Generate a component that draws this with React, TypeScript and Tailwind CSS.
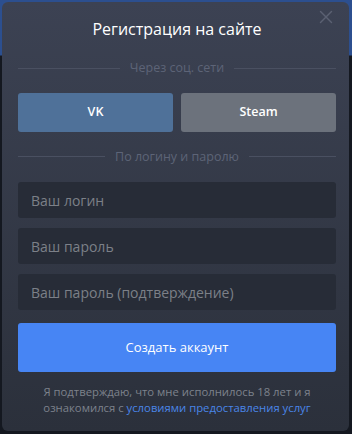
import { X } from "lucide-react"

function Divider({ label }: { label: string }) {
  return (
    <div className="flex items-center gap-[10px]">
      <div className="h-px flex-1 bg-[#4a5061]" />
      <span className="text-[12.5px] leading-none text-[#5d6477]">{label}</span>
      <div className="h-px flex-1 bg-[#4a5061]" />
    </div>
  )
}

const fields = ["Ваш логин", "Ваш пароль", "Ваш пароль (подтверждение)"]

export default function App() {
  return (
    <div
      className="h-[434px] w-[352px] overflow-hidden bg-[linear-gradient(to_bottom,#2c4f8f_0,#2c4f8f_55px,#141820_56px,#141820_100%)] pl-[2px] pt-[2px]"
      style={{ fontFamily: '"Open Sans", "Noto Sans", sans-serif' }}
    >
      <div className="relative h-[429px] w-[347px] rounded-[6px] bg-[linear-gradient(to_bottom,#3c4253,#2b303b)] pl-4 pr-[13px] pt-[15px]">
        <button className="absolute right-[12px] top-[4px] text-[#5b6172]">
          <X size={22} strokeWidth={1.6} />
        </button>
        <h2 className="text-center text-[16px] font-medium leading-[24px] text-white">
          Регистрация на сайте
        </h2>
        <div className="mt-[21px]">
          <Divider label="Через соц. сети" />
        </div>
        <div className="mt-[18px] flex gap-2">
          <button className="h-[39px] flex-1 rounded-[3px] bg-[#4f7199] text-[12.5px] font-semibold text-white">
            VK
          </button>
          <button className="h-[39px] flex-1 rounded-[3px] bg-[#6c727c] text-[12.5px] font-semibold text-white">
            Steam
          </button>
        </div>
        <div className="mt-[19px]">
          <Divider label="По логину и паролю" />
        </div>
        <div className="mt-[19px] flex flex-col gap-[10px]">
          {fields.map((f) => (
            <input
              key={f}
              placeholder={f}
              className="h-[36px] w-full rounded-[3px] bg-[#272c37] px-[13px] text-[14px] text-white outline-none placeholder:text-[#7c8088]"
            />
          ))}
        </div>
        <button className="mt-[13px] h-[49px] w-full rounded-[3px] bg-[#4785f4] text-[13px] font-medium text-white">
          Создать аккаунт
        </button>
        <p className="mt-[12px] text-center text-[11.3px] leading-[16px] text-[#7d828c]">
          Я подтверждаю, что мне исполнилось 18 лет и я
          <br />
          ознакомился с <a className="text-[#4a86e8]">условиями предоставления услуг</a>
        </p>
      </div>
    </div>
  )
}
